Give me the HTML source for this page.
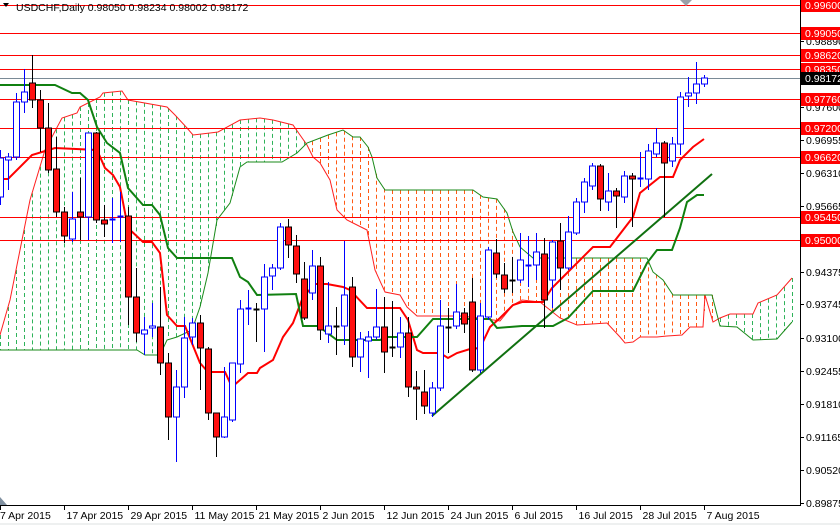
<!DOCTYPE html>
<html><head><meta charset="utf-8">
<style>
html,body{margin:0;padding:0;background:#fff;}
body{width:840px;height:525px;overflow:hidden;position:relative;font-family:"Liberation Sans",sans-serif;}
svg{position:absolute;left:0;top:0;}
</style></head>
<body>
<svg id="c" width="840" height="525" xmlns="http://www.w3.org/2000/svg" font-family="Liberation Sans, sans-serif">
<rect x="0" y="0" width="840" height="525" fill="#fff"/>
<rect x="0" y="523" width="840" height="2" fill="#eef0f0"/>
<g id="cloud"></g>
<g id="levels"></g>
<g id="lines"></g>
<g id="candles"></g>
<g id="axis"></g>
<text x="16" y="11" font-size="10.5" fill="#000">USDCHF,Daily  0.98050 0.98234 0.98002 0.98172</text>
<path d="M3 3 L9 3 L6 7 Z" fill="#000"/>
<path d="M680 0 L692 0 L686 6 Z" fill="#9aa0a8"/>
<path d="M0 497 L7 505 L0 505 Z" fill="#8090a0"/>
</svg>
<script>
var NS="http://www.w3.org/2000/svg";
function el(p,t,a,txt){var e=document.createElementNS(NS,t);for(var k in a)e.setAttribute(k,a[k]);if(txt!=null)e.textContent=txt;document.getElementById(p).appendChild(e);return e;}
function interp(pts,x){if(x<=pts[0][0])return pts[0][1];for(var i=1;i<pts.length;i++){if(x<=pts[i][0]){var a=pts[i-1],b=pts[i];return a[1]+(b[1]-a[1])*(x-a[0])/(b[0]-a[0]||1);}}return pts[pts.length-1][1];}
function pl(pts){return pts.map(function(p){return p[0]+","+p[1]}).join(" ");}
// Span A (red thin) and Span B (green thin)
var A=[[0,335],[10,300],[20,250],[30,200],[45,150],[62,118],[77,113],[80,107],[100,97],[103,93],[122,91],[128,100],[167,107],[175,115],[187,128],[193,135],[210,133],[218,132],[240,120],[260,118],[273,120],[293,125],[307,145],[313,157],[320,163],[330,180],[337,210],[347,220],[357,225],[367,230],[375,270],[385,292],[400,295],[407,307],[417,316],[427,316],[440,316],[460,316],[480,318],[500,321],[513,305],[522,300],[540,302],[560,318],[577,325],[607,323],[620,337],[625,343],[633,342],[640,337],[657,337],[667,336],[682,335],[690,327],[703,327],[705,295],[713,322],[720,318],[730,314],[753,314],[758,303],[777,295],[792,278]];
var B=[[0,350],[137,350],[145,355],[160,355],[167,340],[177,337],[192,330],[200,307],[208,273],[217,220],[230,203],[240,167],[247,162],[282,162],[297,153],[307,143],[328,135],[343,130],[353,137],[360,137],[368,147],[372,157],[377,178],[385,190],[473,190],[483,197],[497,199],[507,213],[513,232],[520,247],[527,253],[533,258],[647,258],[653,272],[663,280],[673,295],[712,295],[720,326],[737,327],[753,340],[777,339],[792,322]];
for(var x=0;x<=792;x+=8){var a=interp(A,x),b=interp(B,x);var col=a<b?"#2fb35a":"#ff5a14";el("cloud","line",{x1:x+0.5,x2:x+0.5,y1:Math.min(a,b),y2:Math.max(a,b),stroke:col,"stroke-width":1,"stroke-dasharray":"4,3"});}
el("cloud","polyline",{points:pl(A),fill:"none",stroke:"#ff2020","stroke-width":1});
el("cloud","polyline",{points:pl(B),fill:"none",stroke:"#1a8a1a","stroke-width":1});
// levels
[5,33,55,69,99,128,157,217,240].forEach(function(y){el("levels","line",{x1:0,x2:800,y1:y+0.5,y2:y+0.5,stroke:"#ff0000","stroke-width":1});});
el("levels","line",{x1:0,x2:800,y1:78.5,y2:78.5,stroke:"#7a8a96","stroke-width":1});
// Tenkan red thick
var T=[[0,179],[8,179],[32,155],[55,148],[97,150],[105,168],[113,175],[120,187],[128,228],[143,242],[152,242],[160,253],[167,315],[177,326],[185,326],[200,363],[208,372],[225,372],[232,387],[248,373],[257,373],[260,368],[273,360],[283,337],[293,323],[303,297],[315,284],[327,284],[343,287],[350,290],[367,308],[400,308],[408,320],[417,350],[423,353],[440,353],[448,358],[457,353],[470,349],[480,348],[490,327],[500,318],[513,305],[522,302],[543,302],[552,288],[568,272],[593,247],[610,247],[633,217],[640,193],[660,177],[673,177],[680,160],[693,147],[704,139]];
el("lines","polyline",{points:pl(T),fill:"none",stroke:"#ff0000","stroke-width":2});
var K=[[0,85],[55,85],[72,93],[80,93],[88,100],[97,127],[107,143],[120,153],[128,188],[143,205],[152,205],[160,215],[168,248],[177,258],[232,258],[240,277],[248,282],[257,295],[296,294],[303,326],[318,326],[337,340],[380,340],[387,337],[417,337],[433,319],[490,319],[497,328],[522,326],[553,326],[568,318],[593,291],[633,291],[647,263],[657,250],[672,250],[680,228],[687,202],[697,195],[704,195]];
el("lines","polyline",{points:pl(K),fill:"none",stroke:"#108010","stroke-width":2});
el("lines","line",{x1:432,y1:416,x2:712,y2:174,stroke:"#107010","stroke-width":2});
// candles: [k,type,top,bot,wt,wb]
var C=[[0,'b',158,197,150,205],[1,'b',157,160,153,190],[2,'b',102,157,93,160],[3,'b',92,102,69,113],[4,'r',83,100,55,108],[5,'r',100,128,90,152],[6,'r',128,170,103,173],[7,'r',169,212,137,217],[8,'r',212,236,207,243],[9,'b',219,239,192,242],[10,'r',212,217,178,240],[11,'b',133,217,133,240],[12,'r',133,220,132,223],[13,'r',220,224,205,237],[14,'db',219,219,198,243],[15,'db',216,216,192,242],[16,'r',216,297,207,325],[17,'r',297,333,268,342],[18,'b',330,334,317,355],[19,'b',326,328,303,337],[20,'r',327,363,287,375],[21,'r',363,417,353,440],[22,'b',387,417,370,462],[23,'b',338,387,317,398],[24,'b',323,337,318,345],[25,'r',323,348,315,390],[26,'r',349,413,347,420],[27,'r',413,437,413,457],[28,'b',417,437,367,438],[29,'b',363,420,363,422],[30,'b',309,364,300,373],[31,'db',308,308,290,325],[32,'d',309,309,303,342],[33,'b',277,309,264,352],[34,'b',268,276,264,290],[35,'b',227,268,223,270],[36,'r',227,245,219,258],[37,'r',246,274,235,283],[38,'r',279,318,262,320],[39,'b',266,293,250,300],[40,'r',266,330,257,340],[41,'b',326,334,282,343],[42,'d',326,326,307,355],[43,'b',295,326,241,345],[44,'r',287,357,277,367],[45,'b',339,357,332,372],[46,'b',337,341,331,378],[47,'b',327,337,289,340],[48,'r',327,352,297,373],[49,'d',347,347,301,357],[50,'b',333,347,317,358],[51,'r',333,387,317,397],[52,'r',387,389,371,420],[53,'r',392,406,370,414],[54,'b',388,413,382,417],[55,'b',326,388,300,391],[56,'d',327,327,308,353],[57,'b',312,326,284,329],[58,'r',313,324,308,333],[59,'r',302,370,278,372],[60,'b',316,370,303,373],[61,'b',250,317,247,320],[62,'r',253,274,239,278],[63,'r',275,289,263,293],[64,'d',280,280,257,293],[65,'b',260,280,233,283],[66,'db',265,265,236,287],[67,'b',252,265,233,280],[68,'r',254,300,238,328],[69,'b',242,280,240,308],[70,'r',241,268,223,290],[71,'b',232,268,216,270],[72,'b',202,233,198,235],[73,'b',182,202,178,213],[74,'b',166,186,163,190],[75,'r',166,199,164,211],[76,'b',191,202,173,211],[77,'r',191,196,188,228],[78,'b',176,197,171,203],[79,'r',176,179,173,227],[80,'db',178,178,152,187],[81,'b',151,179,144,190],[82,'b',143,154,128,157],[83,'r',143,163,141,217],[84,'b',144,161,137,167],[85,'b',97,144,92,155],[86,'b',93,96,77,107],[87,'b',84,93,62,104],[88,'b',78,84,75,87]];
C.forEach(function(c){var x=c[0]*8+0.5,t=c[1];var wc=(t=='b'||t=='db')?"#0000ff":"#000";
el("candles","line",{x1:x,x2:x,y1:c[4],y2:c[5],stroke:wc,"stroke-width":1});
if(t=='d'||t=='db'){el("candles","line",{x1:x-3,x2:x+3,y1:c[2]+0.5,y2:c[2]+0.5,stroke:wc,"stroke-width":2});}
else if(t=='b'){el("candles","rect",{x:x-3,y:c[2],width:6,height:Math.max(1,c[3]-c[2]),fill:"#fff",stroke:"#0000ff","stroke-width":1});}
else{el("candles","rect",{x:x-3,y:c[2],width:6,height:Math.max(1,c[3]-c[2]),fill:"#ff1010",stroke:"#000","stroke-width":1});}
});
// axes
el("axis","line",{x1:800.5,x2:800.5,y1:0,y2:505,stroke:"#000","stroke-width":1});
el("axis","line",{x1:0,x2:801,y1:505.5,y2:505.5,stroke:"#000","stroke-width":1});
[["0.98890",41],["0.97600",107],["0.96955",140],["0.96310",173],["0.95665",206],["0.94375",272],["0.93745",304],["0.93100",338],["0.92455",371],["0.91810",404],["0.91165",437],["0.90520",470],["0.89875",503]].forEach(function(l){el("axis","line",{x1:800,x2:804,y1:l[1]+0.5,y2:l[1]+0.5,stroke:"#000"});el("axis","text",{x:806,y:l[1]+4,"font-size":"10.5",fill:"#000"},l[0]);});
[["0.99600",5],["0.99050",33],["0.98620",55],["0.98350",69],["0.97760",99],["0.97200",128],["0.96620",157],["0.95450",217],["0.95000",240]].forEach(function(l){el("axis","rect",{x:801,y:l[1]-6,width:39,height:13,fill:"#ff0000"});el("axis","text",{x:805,y:l[1]+4,"font-size":"10.5",fill:"#fff"},l[0]);});
el("axis","rect",{x:801,y:72,width:39,height:13,fill:"#000"});el("axis","text",{x:805,y:82,"font-size":"10.5",fill:"#fff"},"0.98172");
var D=["7 Apr 2015","17 Apr 2015","29 Apr 2015","11 May 2015","21 May 2015","2 Jun 2015","12 Jun 2015","24 Jun 2015","6 Jul 2015","16 Jul 2015","28 Jul 2015","7 Aug 2015"];
D.forEach(function(d,i){var x=i*64+0.5;el("axis","line",{x1:x,x2:x,y1:505,y2:510,stroke:"#000"});el("axis","text",{x:(i==0?0:x+2),y:519,"font-size":"10.5",fill:"#000"},d);});
</script>
</body></html>
